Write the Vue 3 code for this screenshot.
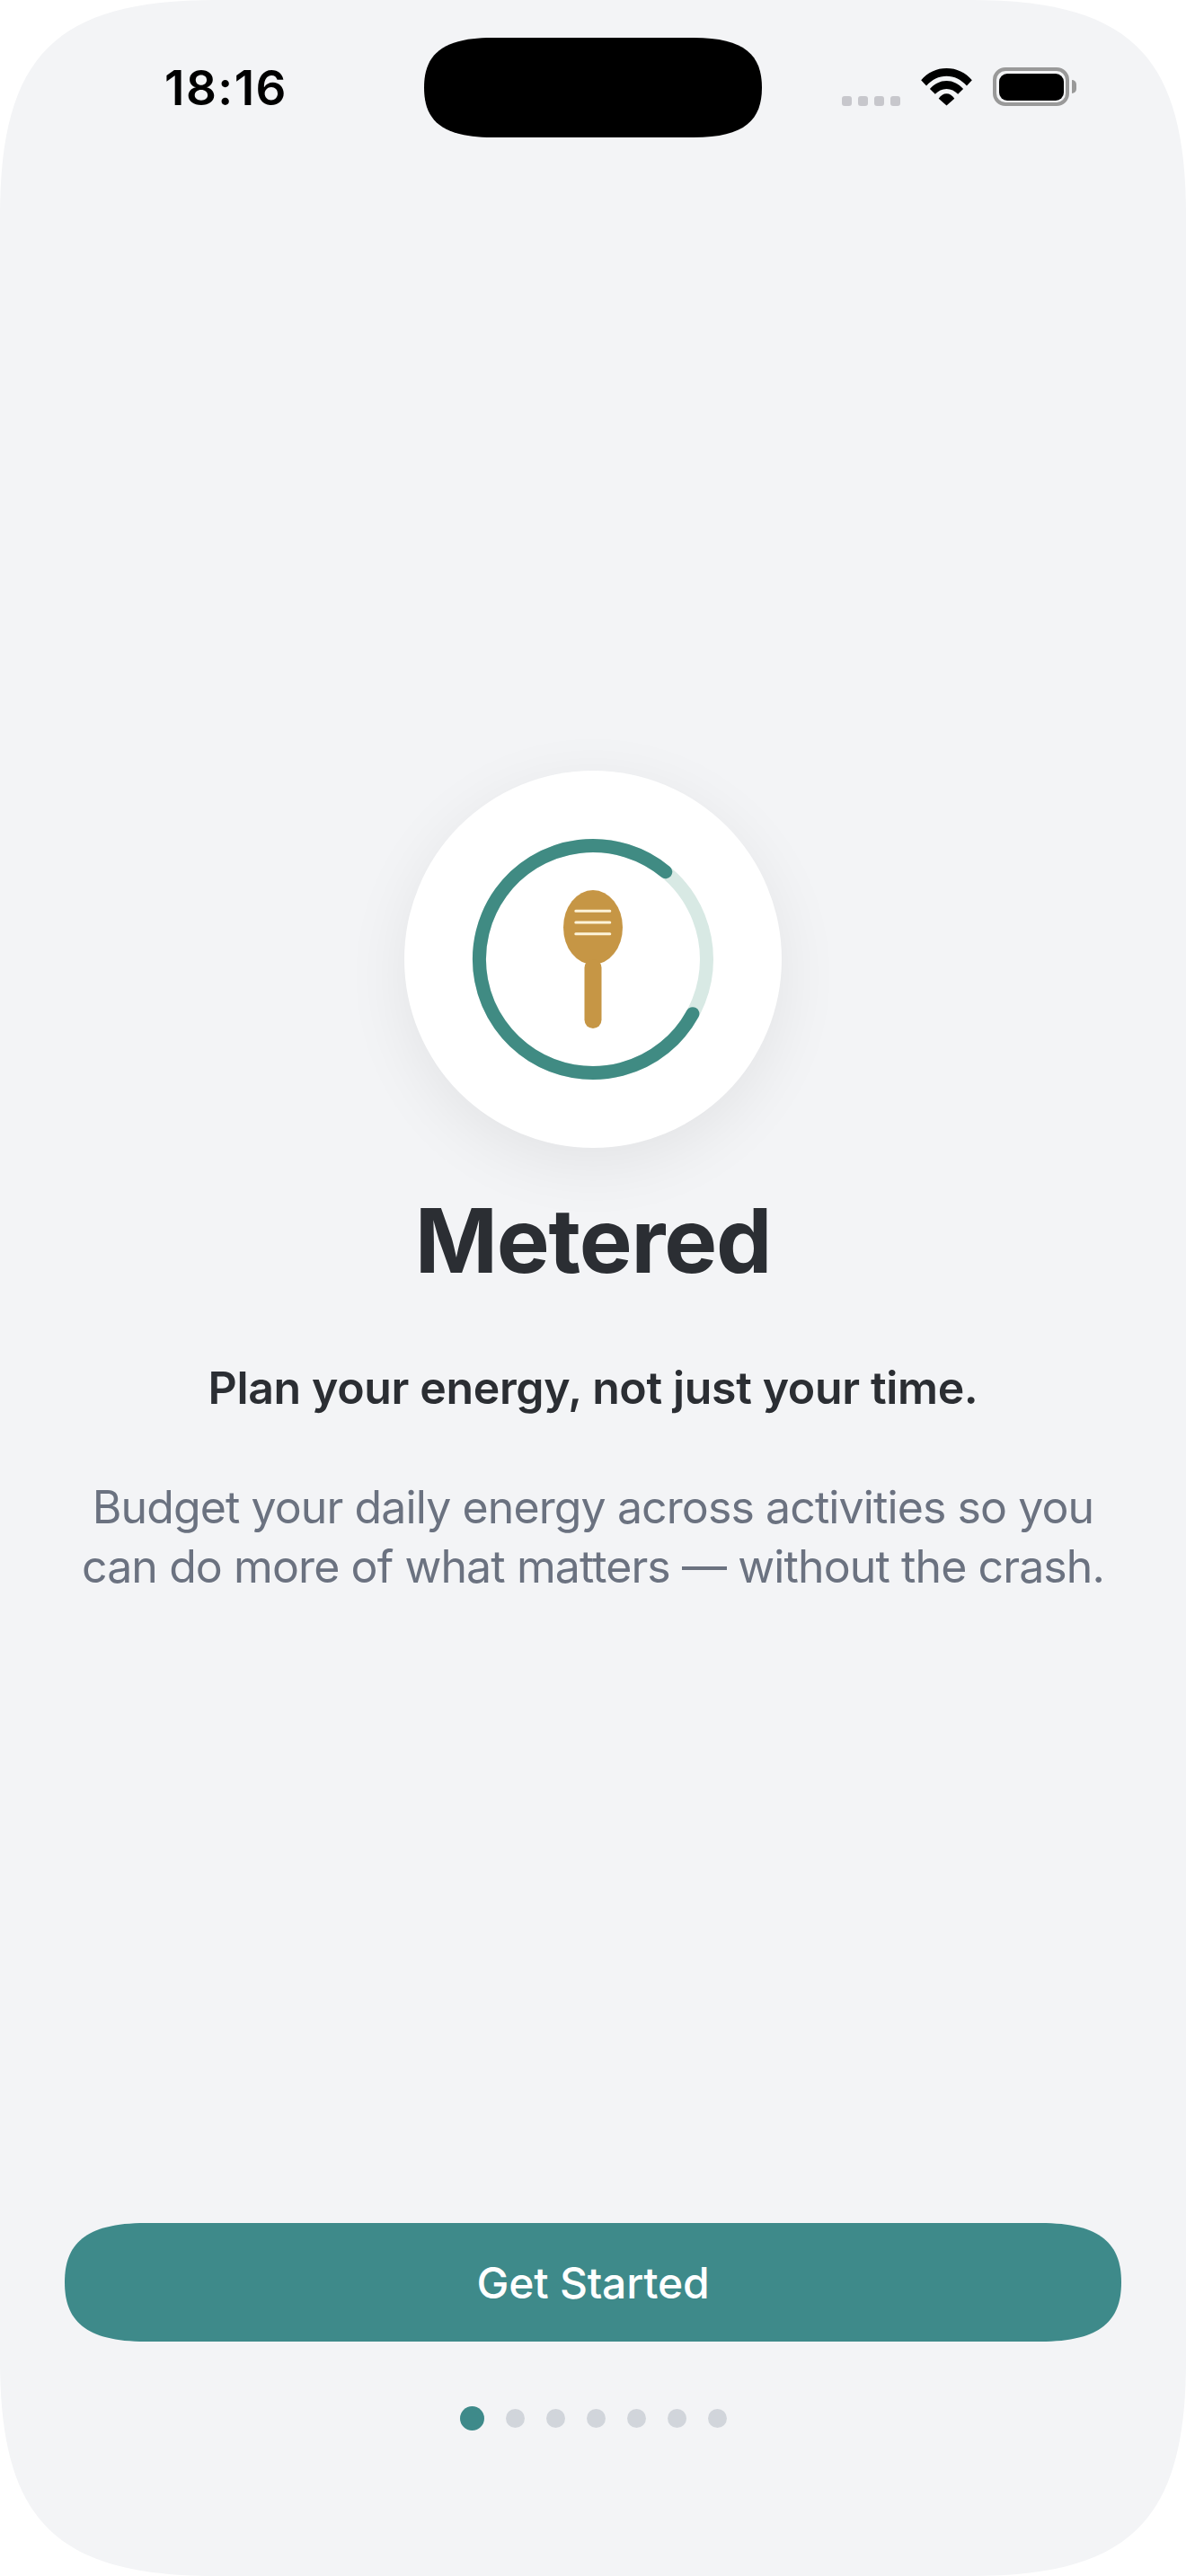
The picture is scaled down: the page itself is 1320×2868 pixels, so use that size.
<template>
  <div class="screen">
    <header class="status-bar">
      <span class="time">18:16</span>
      <div class="island"></div>
      <div class="status-icons">
        <div class="signal">
          <i v-for="n in 4" :key="n"></i>
        </div>
        <svg class="wifi" width="57" height="42" viewBox="0 0 58 43">
          <path d="M0 13.5C7.5 4.8 17.5 0 29 0C40.5 0 50.5 4.8 58 13.5L52 20C45.5 13 38 9 29 9C20 9 12.5 13 6 20Z" />
          <path d="M10 23.5C15 17.8 21.5 14.3 29 14.3C36.5 14.3 43 17.8 48 23.5L42 29.5C38.5 25.8 34 23.5 29 23.5C24 23.5 19.5 25.8 16 29.5Z" />
          <path d="M20 34.5C22.3 30.8 25.5 28.8 29 28.8C32.5 28.8 35.7 30.8 38 34.5L29 42.5Z" />
        </svg>
        <div class="battery">
          <div class="battery-body"><div class="battery-fill"></div></div>
          <div class="battery-nub"></div>
        </div>
      </div>
    </header>

    <main class="content">
      <div class="hero">
        <svg width="280" height="280" viewBox="0 0 280 280">
          <circle cx="140" cy="140" r="126.5" fill="none" stroke="#d8e9e4" stroke-width="15" />
          <path d="M220.8 42.7A126.5 126.5 0 1 0 250.9 200.7" fill="none" stroke="#408b83" stroke-width="15" stroke-linecap="round" />
          <ellipse cx="140" cy="104.5" rx="33" ry="41.5" fill="#c69645" />
          <rect x="130.5" y="140" width="19" height="77" rx="9.5" fill="#c69645" />
          <path d="M120.8 86.3H158.8M120.8 99H158.8M120.8 111.7H158.8" stroke="#fdf3d8" stroke-width="3" stroke-linecap="round" />
        </svg>
      </div>
      <h1 class="title">Metered</h1>
      <p class="tagline">Plan your energy, not just your time.</p>
      <p class="body">Budget your daily energy across activities so you can do more of what matters — without the crash.</p>
    </main>

    <footer class="footer">
      <button class="cta">Get Started</button>
      <div class="dots">
        <span v-for="(d, i) in 7" :key="i" class="dot" :class="{ active: i === 0 }"></span>
      </div>
    </footer>
  </div>
</template>

<script setup>
</script>

<style>
html, body {
  margin: 0;
  background: #fff;
}
</style>

<style scoped>
.screen {
  width: 1320px;
  height: 2868px;
  display: flex;
  flex-direction: column;
  background: #f3f4f6;
  font-family: Inter, "Liberation Sans", sans-serif;
  clip-path: path("M240 0H1080C1258 0 1320 62 1320 240V2628C1320 2806 1258 2868 1080 2868H240C62 2868 0 2806 0 2628V240C0 62 62 0 240 0Z");
}

.status-bar {
  display: grid;
  grid-template-columns: 472px 376px 1fr;
  align-items: center;
  height: 111px;
  margin-top: 42px;
}

.time {
  padding: 2px 0 0 31px;
  text-align: center;
  font-size: 53px;
  font-weight: 600;
  letter-spacing: 1.5px;
  line-height: 1;
  color: #000;
}

.island {
  width: 376px;
  height: 111px;
  background: #000;
  clip-path: path("M76 0H300C357.500 0 376 20 376 55.500C376 91 357.500 111 300 111H76C18.500 111 0 91 0 55.500C0 20 18.500 0 76 0Z");
}

.status-icons {
  display: flex;
  align-items: flex-end;
  padding-left: 89px;
  height: 43px;
  margin-top: -2px;
}

.signal {
  display: flex;
  gap: 7px;
  margin-right: 23px;
}

.signal i {
  width: 11px;
  height: 11px;
  border-radius: 3px;
  background: #c7c7cc;
}

.wifi {
  fill: #000;
  margin-right: 23px;
}

.battery {
  display: flex;
  align-items: center;
  height: 43px;
}

.battery-body {
  box-sizing: border-box;
  width: 85px;
  height: 43px;
  padding: 2.5px;
  border: 4px solid #999;
  border-radius: 14px;
}

.battery-fill {
  width: 100%;
  height: 100%;
  border-radius: 9px;
  background: #000;
}

.battery-nub {
  width: 5px;
  height: 15px;
  margin-left: 3px;
  border-radius: 0 5px 5px 0;
  background: #999;
}

.content {
  flex: 1;
  display: flex;
  flex-direction: column;
  align-items: center;
  padding-top: 705px;
}

.hero {
  width: 420px;
  height: 420px;
  display: flex;
  align-items: center;
  justify-content: center;
  border-radius: 50%;
  background: #fff;
  box-shadow: 0 18px 72px rgba(0, 0, 0, 0.07);
}

.title {
  margin: 45px 0 0;
  font-size: 99px;
  font-weight: 700;
  letter-spacing: -1.2px;
  line-height: 116px;
  color: #2b2e33;
}

.tagline {
  margin: 73px 0 0;
  font-size: 50px;
  font-weight: 600;
  letter-spacing: -0.35px;
  line-height: 66px;
  color: #2b2e33;
}

.body {
  width: 1176px;
  margin: 67px 0 0;
  font-size: 50px;
  font-weight: 400;
  letter-spacing: -0.9px;
  line-height: 66px;
  text-align: center;
  color: #6b7280;
}

.footer {
  display: flex;
  flex-direction: column;
  align-items: center;
  padding: 0 72px 162px;
}

.cta {
  width: 1176px;
  height: 132px;
  border: 0;
  background: #3e8a8a;
  color: #fff;
  font-family: inherit;
  font-size: 48px;
  font-weight: 500;
  letter-spacing: -0.2px;
  clip-path: path("M90 0H1086C1154 0 1176 24 1176 66C1176 108 1154 132 1086 132H90C22 132 0 108 0 66C0 24 22 0 90 0Z");
}

.dots {
  display: flex;
  align-items: center;
  gap: 24px;
  margin-top: 72px;
}

.dot {
  width: 21px;
  height: 21px;
  border-radius: 50%;
  background: #d1d5db;
}

.dot.active {
  width: 27px;
  height: 27px;
  background: #3e8a8a;
}
</style>
